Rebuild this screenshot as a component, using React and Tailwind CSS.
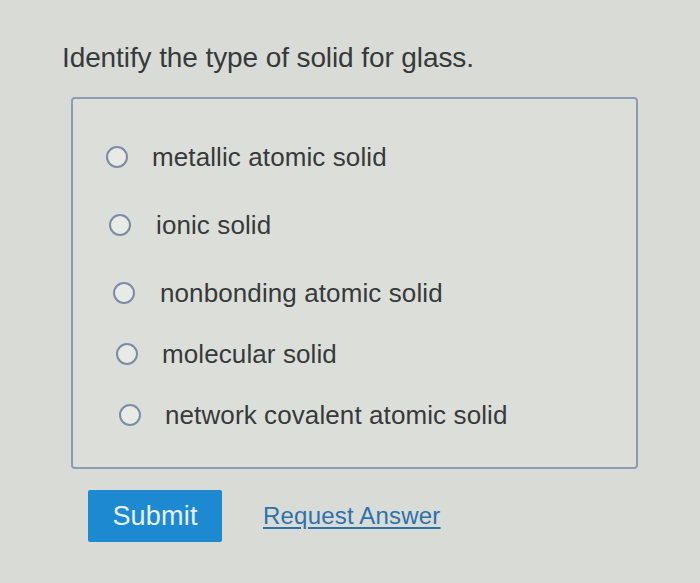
const options = [
  { label: "metallic atomic solid", indent: "pl-[33px]", gap: "gap-[24px]" },
  { label: "ionic solid", indent: "pl-[36px]", gap: "gap-[25px]" },
  { label: "nonbonding atomic solid", indent: "pl-[40px]", gap: "gap-[25px]" },
  { label: "molecular solid", indent: "pl-[43px]", gap: "gap-[24px]" },
  { label: "network covalent atomic solid", indent: "pl-[46px]", gap: "gap-[24px]" },
];

function Radio() {
  return (
    <span className="w-[22px] h-[22px] rounded-full border-[2.5px] border-[#7a8ca6] bg-[#e8eae6] shrink-0" />
  );
}

export default function App() {
  return (
    <div
      className="w-[700px] h-[583px] bg-[#d9dcd6] text-[#37393b] overflow-hidden"
      style={{ fontFamily: '"Liberation Sans", Arial, sans-serif' }}
    >
      {/* Question */}
      <h1 className="pl-[62px] pt-[42px] text-[28px] leading-[32px] tracking-[-0.1px]">
        Identify the type of solid for glass.
      </h1>

      {/* Choices */}
      <div className="ml-[71px] mt-[23px] w-[567px] h-[372px] border-2 border-[#8e9cb2] rounded-[4px] bg-[#dcdfd9] pt-[43px]">
        <div className="flex flex-col gap-[38px]">
          {options.map((opt, i) => (
            <label
              key={i}
              className={`flex items-center ${opt.gap} ${opt.indent} h-[30px] ${i >= 3 ? "-mt-[7px]" : ""}`}
            >
              <Radio />
              <span className="text-[26px] leading-[30px] tracking-[0.1px]">{opt.label}</span>
            </label>
          ))}
        </div>
      </div>

      {/* Actions */}
      <div className="flex items-center pl-[88px] mt-[21px]">
        <button className="w-[134px] h-[52px] bg-[#1d89d0] text-[#e8f2f8] text-[27px] tracking-[0.2px] rounded-[2px]">
          Submit
        </button>
        <a className="ml-[41px] text-[24px] text-[#2d71ab] underline underline-offset-[3px] tracking-[0.2px]">
          Request Answer
        </a>
      </div>
    </div>
  );
}
